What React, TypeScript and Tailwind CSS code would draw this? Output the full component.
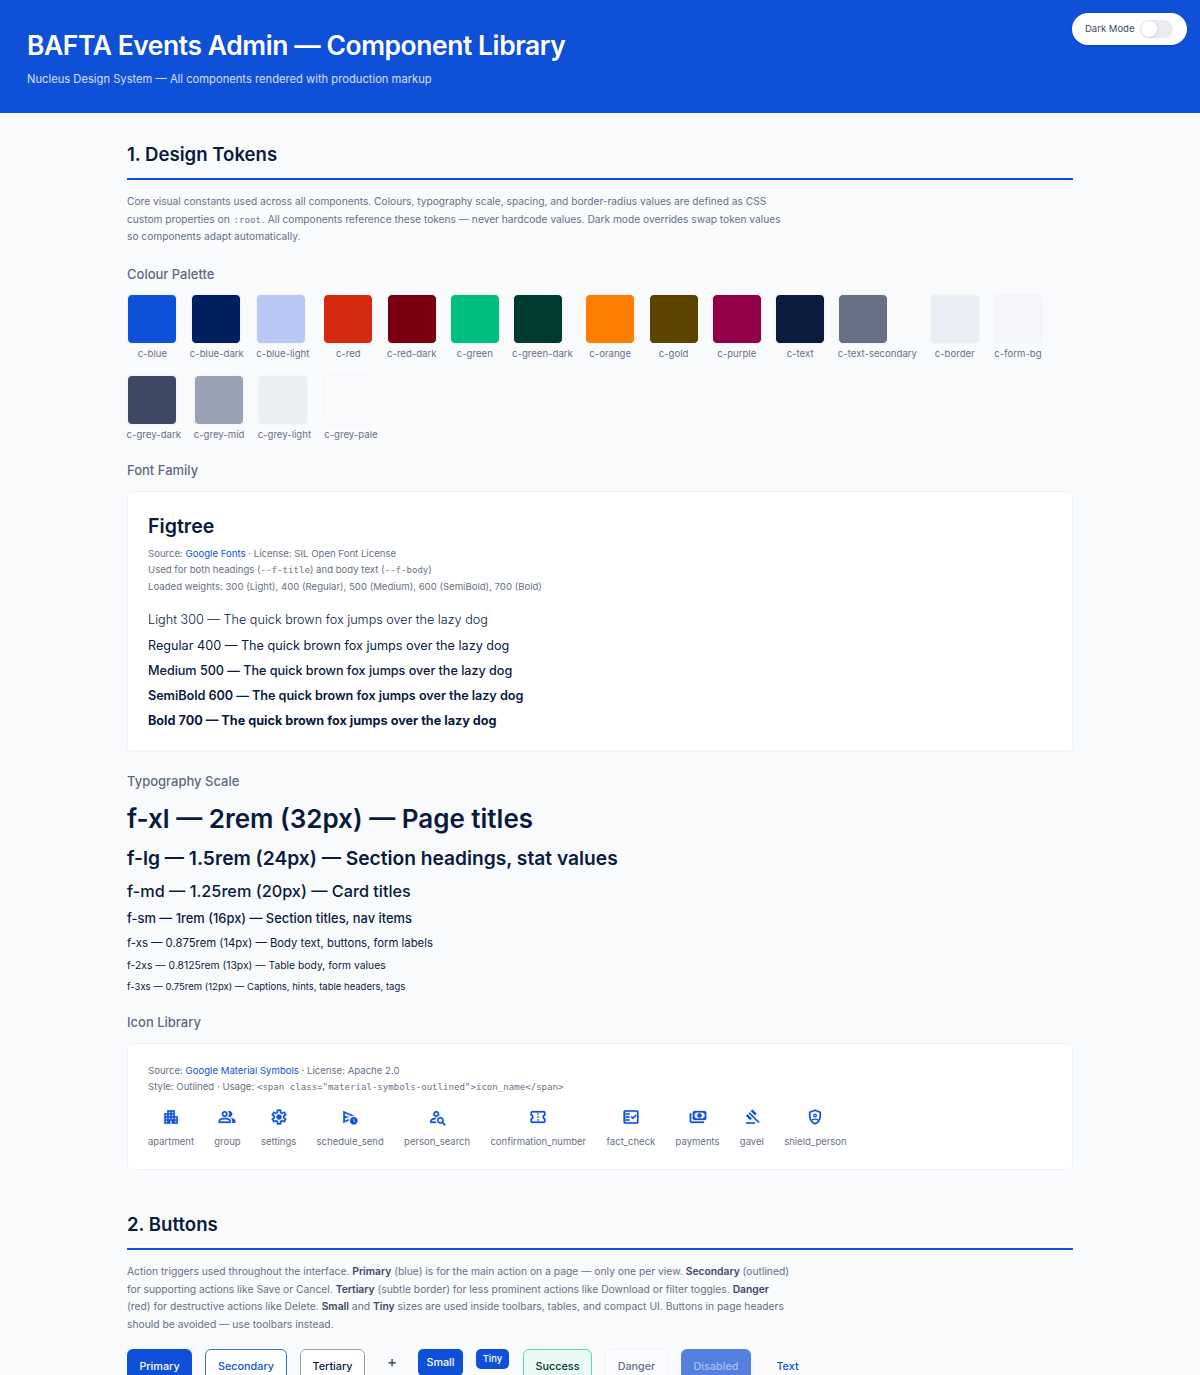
const rowOne = [
  { name: 'c-blue', bg: 'bg-[#0f50d8]', w: 'w-[50.7px]' },
  { name: 'c-blue-dark', bg: 'bg-[#001f5f]', w: 'w-[51.7px]' },
  { name: 'c-blue-light', bg: 'bg-[#b8c7f3]', w: 'w-[53.7px]' },
  { name: 'c-red', bg: 'bg-[#d62a0e]', w: 'w-[50.7px]' },
  { name: 'c-red-dark', bg: 'bg-[#7a0010]', w: 'w-[49.7px]' },
  { name: 'c-green', bg: 'bg-[#00c07f]', w: 'w-[49.7px]' },
  { name: 'c-green-dark', bg: 'bg-[#003a30]', w: 'w-[59px]' },
  { name: 'c-orange', bg: 'bg-[#ff7e00]', w: 'w-[50px]' },
  { name: 'c-gold', bg: 'bg-[#5c4400]', w: 'w-[50px]' },
  { name: 'c-purple', bg: 'bg-[#920045]', w: 'w-[50px]' },
  { name: 'c-text', bg: 'bg-[#0a1b3d]', w: 'w-[50px]' },
  { name: 'c-text-secondary', bg: 'bg-[#687085]', w: 'w-[78px]' },
  { name: 'c-border', bg: 'bg-[#e9eef5]', w: 'w-[50px]' },
  { name: 'c-form-bg', bg: 'bg-[#f3f5f8]', w: 'w-[50px]' },
]

const rowTwo = [
  { name: 'c-grey-dark', bg: 'bg-[#3e4a63]', w: 'w-[53.5px]' },
  { name: 'c-grey-mid', bg: 'bg-[#9aa3b5]', w: 'w-[50.5px]' },
  { name: 'c-grey-light', bg: 'bg-[#ebeef2]', w: 'w-[53.5px]' },
  { name: 'c-grey-pale', bg: 'bg-[#f9fafc]', w: 'w-[53px]' },
]

const weights = [
  { label: 'Light 300', cls: 'font-light' },
  { label: 'Regular 400', cls: 'font-normal' },
  { label: 'Medium 500', cls: 'font-medium tracking-[-0.04px]' },
  { label: 'SemiBold 600', cls: 'font-semibold tracking-[-0.04px]' },
  { label: 'Bold 700', cls: 'font-bold' },
]

const icons = [
  {
    name: 'apartment',
    d: 'M120-120v-560h160v-160h400v320h160v400H520v-160h-80v160H120Zm80-80h80v-80h-80v80Zm0-160h80v-80h-80v80Zm0-160h80v-80h-80v80Zm160 160h80v-80h-80v80Zm0-160h80v-80h-80v80Zm0-160h80v-80h-80v80Zm160 320h80v-80h-80v80Zm0-160h80v-80h-80v80Zm0-160h80v-80h-80v80Zm160 480h80v-80h-80v80Zm0-160h80v-80h-80v80Z',
  },
  {
    name: 'group',
    d: 'M40-160v-112q0-34 17.500-62.500T104-378q62-31 126-46.500T360-440q66 0 130 15.500T616-378q29 15 46.500 43.500T680-272v112H40Zm720 0v-120q0-44-24.500-84.500T666-434q51 6 96 20.500t84 35.500q36 20 55 44.500t19 53.500v120H760ZM360-480q-66 0-113-47t-47-113q0-66 47-113t113-47q66 0 113 47t47 113q0 66-47 113t-113 47Zm400-160q0 66-47 113t-113 47q-11 0-28-2.500t-28-5.500q27-32 41.500-71t14.500-81q0-42-14.500-81T544-792q14-5 28-6.500t28-1.500q66 0 113 47t47 113ZM120-240h480v-32q0-11-5.500-20T580-306q-54-27-109-40.500T360-360q-56 0-111 13.500T140-306q-9 5-14.500 14t-5.500 20v32Zm240-320q33 0 56.500-23.500T440-640q0-33-23.500-56.500T360-720q-33 0-56.500 23.500T280-640q0 33 23.500 56.500T360-560Zm0 320Zm0-400Z',
  },
  {
    name: 'settings',
    d: 'm370-80-16-128q-13-5-24.500-12T307-235l-119 50L78-375l103-78q-1-7-1-13.500v-27q0-6.500 1-13.500L78-585l110-190 119 50q11-8 23-15t24-12l16-128h220l16 128q13 5 24.500 12t22.500 15l119-50 110 190-103 78q1 7 1 13.500v27q0 6.500-2 13.500l103 78-110 190-118-50q-11 8-23 15t-24 12L590-80H370Zm70-80h79l14-106q31-8 57.500-23.500T639-327l99 41 39-68-86-65q5-14 7-29.500t2-31.500q0-16-2-31.500t-7-29.500l86-65-39-68-99 42q-22-23-48.500-38.500T533-694l-13-106h-79l-14 106q-31 8-57.500 23.500T321-633l-99-41-39 68 86 64q-5 15-7 30t-2 32q0 16 2 31t7 30l-86 65 39 68 99-42q22 23 48.500 38.500T427-266l13 106Zm42-180q58 0 99-41t41-99q0-58-41-99t-99-41q-59 0-99.500 41T342-480q0 58 40.500 99t99.500 41Zm-2-140Z',
  },
  {
    name: 'schedule_send',
    d: 'M120-160v-640l572 240h-12q-35 0-66 8t-60 22L200-680v140l240 60-240 60v140l216-92q-8 23-12 45.500t-4 46.500v2L120-160Zm560 80q-83 0-141.500-58.500T480-280q0-83 58.500-141.500T680-480q83 0 141.500 58.500T880-280q0 83-58.500 141.500T680-80Zm66-106 28-28-74-74v-112h-40v128l86 86ZM200-372v-308 400-92Z',
  },
  {
    name: 'person_search',
    d: 'M440-480q-66 0-113-47t-47-113q0-66 47-113t113-47q66 0 113 47t47 113q0 66-47 113t-113 47Zm0-80q33 0 56.500-23.500T520-640q0-33-23.500-56.500T440-720q-33 0-56.500 23.500T360-640q0 33 23.500 56.500T440-560ZM884-20 756-148q-21 12-45 20t-51 8q-75 0-127.500-52.500T480-300q0-75 52.500-127.500T660-480q75 0 127.500 52.500T840-300q0 27-8 51t-20 45L940-76l-56 56ZM660-200q42 0 71-29t29-71q0-42-29-71t-71-29q-42 0-71 29t-29 71q0 42 29 71t71 29Zm-540 40v-111q0-34 17-63t47-44q51-26 115-44t142-18q-12 18-20.500 38.500T407-359q-60 5-107 20.500T221-306q-10 5-15.500 14.500T200-271v31h207q5 22 13.500 42t20.500 38H120Zm320-480Zm-33 400Z',
  },
  {
    name: 'confirmation_number',
    d: 'M480-280q17 0 28.500-11.500T520-320q0-17-11.500-28.500T480-360q-17 0-28.500 11.500T440-320q0 17 11.500 28.500T480-280Zm0-160q17 0 28.500-11.500T520-480q0-17-11.500-28.500T480-520q-17 0-28.500 11.500T440-480q0 17 11.500 28.500T480-440Zm0-160q17 0 28.500-11.500T520-640q0-17-11.500-28.500T480-680q-17 0-28.500 11.500T440-640q0 17 11.500 28.500T480-600Zm320 440H160q-33 0-56.500-23.500T80-240v-160q33 0 56.500-23.500T160-480q0-33-23.500-56.500T80-560v-160q0-33 23.500-56.500T160-800h640q33 0 56.500 23.500T880-720v160q-33 0-56.500 23.500T800-480q0 33 23.500 56.500T880-400v160q0 33-23.500 56.500T800-160Zm0-80v-102q-37-22-58.500-58.500T720-480q0-43 21.500-79.500T800-618v-102H160v102q37 22 58.500 58.500T240-480q0 43-21.500 79.500T160-342v102h640ZM480-480Z',
  },
  {
    name: 'fact_check',
    d: 'M160-120q-33 0-56.500-23.500T80-200v-560q0-33 23.500-56.500T160-840h640q33 0 56.500 23.500T880-760v560q0 33-23.500 56.500T800-120H160Zm0-80h640v-560H160v560Zm40-80h200v-80H200v80Zm382-80 198-198-57-57-141 142-57-57-56 57 113 113Zm-382-80h200v-80H200v80Zm0-160h200v-80H200v80Zm-40 400v-560 560Z',
  },
  {
    name: 'payments',
    d: 'M560-440q-50 0-85-35t-35-85q0-50 35-85t85-35q50 0 85 35t35 85q0 50-35 85t-85 35ZM280-320q-33 0-56.500-23.500T200-400v-320q0-33 23.500-56.500T280-800h560q33 0 56.500 23.500T920-720v320q0 33-23.500 56.500T840-320H280Zm80-80h400q0-33 23.500-56.500T840-480v-160q-33 0-56.500-23.500T760-720H360q0 33-23.500 56.500T280-640v160q33 0 56.500 23.500T360-400Zm440 240H120q-33 0-56.500-23.500T40-240v-440h80v440h680v80ZM280-400v-320 320Z',
  },
  {
    name: 'gavel',
    d: 'M160-120v-80h480v80H160Zm226-194L160-540l84-86 228 226-86 86Zm254-254L414-796l86-84 226 226-86 86Zm184 408L302-682l56-56 522 522-56 56Z',
  },
  {
    name: 'shield_person',
    d: 'M480-80q-139-35-229.500-159.500T160-516v-244l320-120 320 120v244q0 152-90.500 276.500T480-80Zm0-84q104-33 172-132t68-220v-189l-240-90-240 90v189q0 121 68 220t172 132Zm0-316Z',
    extra: true,
  },
]

function Swatch({ name, bg, w }: { name: string; bg: string; w: string }) {
  return (
    <div className={`${w} shrink-0`}>
      <div className={`w-[50px] h-[50px] rounded-[5px] border border-[#f3f5f8] ${bg}`} />
      <div className="flex justify-center mt-[2px] text-[9.6px] leading-[16px] text-[#687085] whitespace-nowrap">{name}</div>
    </div>
  )
}

function SubHead({ children, className }: { children: string; className: string }) {
  return <h3 className={`text-[13px] leading-[18px] font-medium text-[#5f6a7f] ${className}`}>{children}</h3>
}

function Code({ children }: { children: string }) {
  return <code className="[font-family:'DejaVu_Sans_Mono',monospace] text-[9.1px] leading-none">{children}</code>
}

export default function App() {
  return (
    <div className="h-[1375px] overflow-hidden bg-[#f9fafc] text-[#0a1b3d] [font-family:Inter,sans-serif]">
      <header className="relative h-[113px] bg-[#0f50d8] pt-[29px] pl-[27px] text-white">
        <h1 className="text-[26.4px] leading-[32px] font-semibold tracking-[-0.4px]">BAFTA Events Admin — Component Library</h1>
        <p className="mt-[9px] text-[11.2px] leading-[18px] text-[#d6e0f8]">Nucleus Design System — All components rendered with production markup</p>
        <div className="absolute top-[13px] right-[13px] flex h-[32px] w-[115px] items-center gap-[7px] rounded-full bg-white pl-[13px] shadow-sm">
          <span className="w-[48px] text-[9.5px] text-[#3e4a63] whitespace-nowrap">Dark Mode</span>
          <span className="relative h-[18px] w-[33px] rounded-full bg-[#e9ebf0]">
            <span className="absolute left-[1px] top-[1px] h-[16px] w-[16px] rounded-full bg-white shadow" />
          </span>
        </div>
      </header>

      <main className="w-[946px] mx-auto">
        <h2 className="mt-[28px] text-[18.6px] leading-[26px] font-semibold">1. Design Tokens</h2>
        <div className="mt-[11px] h-[2px] bg-[#0f50d8]" />
        <p className="mt-[13px] h-[53px] text-[10.2px] leading-[17.6px] text-[#667085] whitespace-nowrap">
          Core visual constants used across all components. Colours, typography scale, spacing, and border-radius values are defined as CSS
          <br />
          custom properties on <span className="mx-[1px] text-[10px] leading-none"><Code>:root</Code></span>. All components reference these tokens — never hardcode values. Dark mode overrides swap token values
          <br />
          so components adapt automatically.
        </p>

        <SubHead className="mt-[19px]">Colour Palette</SubHead>
        <div className="mt-[11px] flex gap-[13.3px]">
          {rowOne.map((s) => (
            <Swatch key={s.name} {...s} />
          ))}
        </div>
        <div className="mt-[13px] flex gap-[13.3px]">
          {rowTwo.map((s) => (
            <Swatch key={s.name} {...s} />
          ))}
        </div>

        <SubHead className="mt-[18px]">Font Family</SubHead>
        <section className="mt-[12px] h-[261px] rounded-[5px] border border-[#eef1f5] bg-white px-[20px] pt-[20px]">
          <h4 className="text-[19.6px] leading-[28px] font-semibold">Figtree</h4>
          <p className="mt-[6px] text-[9.6px] leading-[16.4px] text-[#667085]">
            Source: <span className="text-[#0f50d8]">Google Fonts</span> · License: SIL Open Font License
            <br />
            Used for both headings (<Code>--f-title</Code>) and body text (<Code>--f-body</Code>)
            <br />
            Loaded weights: 300 (Light), 400 (Regular), 500 (Medium), 600 (SemiBold), 700 (Bold)
          </p>
          <div className="mt-[15px] flex flex-col gap-[5.3px] text-[12.65px] leading-[20px]">
            {weights.map((w) => (
              <div key={w.label} className={w.cls}>
                {w.label} — The quick brown fox jumps over the lazy dog
              </div>
            ))}
          </div>
        </section>

        <SubHead className="mt-[20px]">Typography Scale</SubHead>
        <div className="font-medium">
          <div className="mt-[11px] text-[26px] leading-[36px] font-semibold">f-xl — 2rem (32px) — Page titles</div>
          <div className="mt-[7px] text-[19.2px] leading-[28px] font-semibold">f-lg — 1.5rem (24px) — Section headings, stat values</div>
          <div className="mt-[7px] text-[16.25px] leading-[24px]">f-md — 1.25rem (20px) — Card titles</div>
          <div className="mt-[6px] text-[12.9px] leading-[20px]">f-sm — 1rem (16px) — Section titles, nav items</div>
          <div className="mt-[6px] text-[11.3px] leading-[16px] font-normal">f-xs — 0.875rem (14px) — Body text, buttons, form labels</div>
          <div className="mt-[6px] text-[10.35px] leading-[16px] font-normal">f-2xs — 0.8125rem (13px) — Table body, form values</div>
          <div className="mt-[6px] text-[9.5px] leading-[16px] font-normal">f-3xs — 0.75rem (12px) — Captions, hints, table headers, tags</div>
        </div>

        <SubHead className="mt-[18px]">Icon Library</SubHead>
        <section className="mt-[12px] h-[127px] rounded-[5px] border border-[#eef1f5] bg-white px-[20px] pt-[19px]">
          <p className="text-[9.6px] leading-[16.4px] text-[#667085]">
            Source: <span className="text-[#0f50d8]">Google Material Symbols</span> · License: Apache 2.0
            <br />
            Style: Outlined · Usage: <Code>{'<span class="material-symbols-outlined">icon_name</span>'}</Code>
          </p>
          <div className="mt-[12px] flex gap-[20.3px]">
            {icons.map((icon) => (
              <div key={icon.name} className="flex flex-col items-center">
                <svg viewBox="0 -960 960 960" className="h-[18px] w-[18px] fill-[#0f50d8] stroke-[#0f50d8] stroke-[14]">
                  <path d={icon.d} />
                  {icon.extra && (
                    <g fill="none" strokeWidth="70">
                      <circle cx="480" cy="-560" r="70" />
                      <path d="M310-315q80-55 170-55t170 55" />
                    </g>
                  )}
                </svg>
                <span className="mt-[8px] text-[9.5px] leading-[16px] text-[#667085] whitespace-nowrap">{icon.name}</span>
              </div>
            ))}
          </div>
        </section>

        <h2 className="mt-[41px] text-[18.6px] leading-[26px] font-semibold">2. Buttons</h2>
        <div className="mt-[11px] h-[2px] bg-[#0f50d8]" />
        <p className="mt-[13px] text-[10.3px] leading-[17.6px] text-[#667085] whitespace-nowrap">
          Action triggers used throughout the interface. <b className="font-semibold text-[#3e4a63]">Primary</b> (blue) is for the main action on a page — only one per view. <b className="font-semibold text-[#3e4a63]">Secondary</b> (outlined)
          <br />
          for supporting actions like Save or Cancel. <b className="font-semibold text-[#3e4a63]">Tertiary</b> (subtle border) for less prominent actions like Download or filter toggles. <b className="font-semibold text-[#3e4a63]">Danger</b>
          <br />
          (red) for destructive actions like Delete. <b className="font-semibold text-[#3e4a63]">Small</b> and <b className="font-semibold text-[#3e4a63]">Tiny</b> sizes are used inside toolbars, tables, and compact UI. Buttons in page headers
          <br />
          should be avoided — use toolbars instead.
        </p>
        <div className="mt-[16px] flex items-start gap-[13px] text-[10.8px] font-medium">
          <button className="h-[35px] w-[65px] rounded-[6px] bg-[#0f50d8] text-white">Primary</button>
          <button className="h-[35px] w-[82px] rounded-[6px] border border-[#3a70e0] bg-white text-[#0f50d8]">Secondary</button>
          <button className="h-[35px] w-[65px] rounded-[6px] border border-[#9aa3b5] bg-white text-[#0a1b3d]">Tertiary</button>
          <span className="mx-[9px] w-[9px] pt-[3px] text-[15px] leading-[20px] text-[#3e4a63]">+</span>
          <button className="h-[27px] w-[45px] rounded-[5px] bg-[#0f50d8] text-white">Small</button>
          <button className="h-[20px] w-[33px] rounded-[5px] bg-[#0f50d8] text-[9.5px] text-white">Tiny</button>
          <button className="ml-[1px] h-[35px] w-[69px] rounded-[6px] border border-[#5fd3ac] bg-[#e9f9f3] text-[#003a30]">Success</button>
          <button className="h-[35px] w-[63px] rounded-[6px] border border-[#f0f2f5] bg-[#fbfcfd] text-[#687085]">Danger</button>
          <button className="h-[35px] w-[70px] rounded-[6px] bg-[#5680e0] text-[#a9bff0]">Disabled</button>
          <button className="ml-[12px] h-[35px] w-[23px] text-[#0f50d8]">Text</button>
        </div>
      </main>
    </div>
  )
}
